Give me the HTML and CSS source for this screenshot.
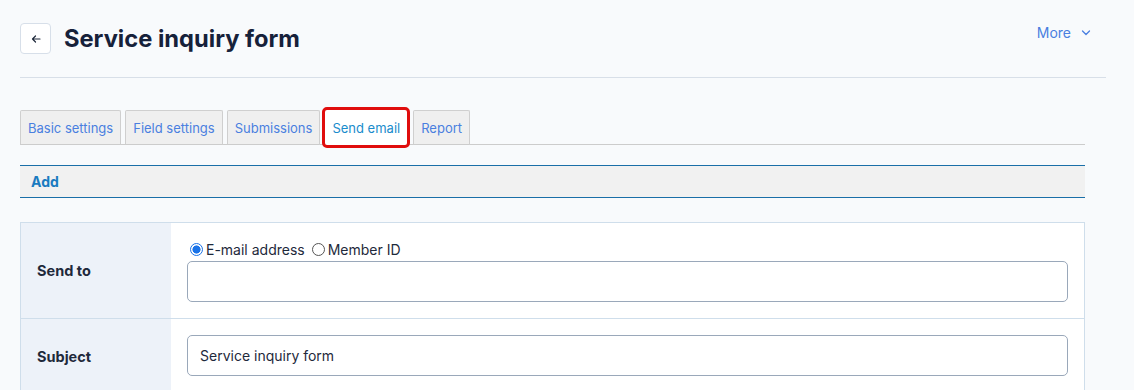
FILE: index.html
```html
<!DOCTYPE html>
<html>
<head>
<meta charset="utf-8">
<link rel="stylesheet" href="styles.css">
</head>
<body>
<div class="page">
  <header class="header">
    <div class="title-group">
      <button class="back-btn" aria-label="Back">
        <svg width="10" height="10" viewBox="0 0 10 10"><path d="M9 5H1.5M4.5 2L1.5 5l3 3" fill="none" stroke="#1e293b" stroke-width="1.2" stroke-linecap="round" stroke-linejoin="round"/></svg>
      </button>
      <h1 class="title">Service inquiry form</h1>
    </div>
    <div class="more">More
      <svg width="10" height="6" viewBox="0 0 10 6"><path d="M1.5 1l3.5 3.5L8.5 1" fill="none" stroke="#4a7fe0" stroke-width="1.3" stroke-linecap="round" stroke-linejoin="round"/></svg>
    </div>
  </header>
  <div class="content">
    <nav class="tabs">
      <a class="tab">Basic settings</a>
      <a class="tab">Field settings</a>
      <a class="tab">Submissions</a>
      <a class="tab active">Send email</a>
      <a class="tab">Report</a>
    </nav>
    <div class="add-bar"><a class="add-link">Add</a></div>
    <div class="form-table">
      <div class="row row-sendto">
        <div class="label">Send to</div>
        <div class="field">
          <div class="radios">
            <label class="radio"><span class="radio-dot checked"></span>E-mail address</label>
            <label class="radio"><span class="radio-dot"></span>Member ID</label>
          </div>
          <div class="input"></div>
        </div>
      </div>
      <div class="row row-subject">
        <div class="label">Subject</div>
        <div class="field">
          <div class="input">Service inquiry form</div>
        </div>
      </div>
    </div>
  </div>
</div>
</body>
</html>
```
FILE: styles.css
```css
* { box-sizing: border-box; }
html, body { margin: 0; padding: 0; }
body {
  background: #f8fafc;
  font-family: "Inter", "Liberation Sans", sans-serif;
  color: #1e293b;
  overflow: hidden;
  height: 390px;
}
.page { padding: 0 28px 0 20px; }
.header {
  height: 78px;
  border-bottom: 1px solid #d8dfe8;
  display: flex;
  justify-content: space-between;
  align-items: flex-start;
}
.title-group {
  display: flex;
  align-items: center;
  gap: 13px;
  margin-top: 23px;
}
.back-btn {
  width: 31px;
  height: 31px;
  border: 1px solid #d7dfe9;
  border-radius: 4px;
  background: #fff;
  display: flex;
  align-items: center;
  justify-content: center;
  padding: 0;
}
.title {
  margin: 0;
  font-size: 23.7px;
  font-weight: 700;
  color: #16213a;
}
.more {
  margin-top: 24px;
  margin-right: 15px;
  color: #4a7fe0;
  font-size: 14px;
  display: flex;
  align-items: center;
  gap: 10px;
}
.content { padding-right: 21px; padding-top: 32px; }
.tabs {
  display: flex;
  gap: 4px;
  border-bottom: 1px solid #cccccc;
  height: 35px;
  align-items: flex-end;
}
.tab {
  height: 35px;
  margin-bottom: -1px;
  padding: 0 7px;
  display: flex;
  align-items: center;
  background: #efefef;
  border: 1px solid #cfcfcf;
  border-bottom-color: #cccccc;
  border-radius: 2px 2px 0 0;
  color: #4a7fe0;
  font-size: 13px;
}
.tab.active {
  background: #fff;
  color: #1a8ccc;
  border: 3px solid #e00d0d;
  border-radius: 5px;
  height: 41px;
  margin-bottom: -4px;
  margin-left: -2px;
  margin-right: -1px;
  padding: 0 7px;
}
.add-bar {
  margin-top: 20px;
  height: 33px;
  border-top: 1px solid #1a6fa8;
  border-bottom: 1px solid #1a6fa8;
  background: #f1f1f1;
  display: flex;
  align-items: center;
  padding-left: 11px;
}
.add-link {
  color: #1a7bc0;
  font-weight: 700;
  font-size: 14px;
}
.form-table {
  margin-top: 24px;
  border: 1px solid #cfdeeb;
  background: #fff;
}
.row {
  display: flex;
}
.row + .row { border-top: 1px solid #cfdeeb; }
.label {
  width: 150px;
  flex-shrink: 0;
  background: #edf2f9;
  font-weight: 700;
  font-size: 14.5px;
  display: flex;
  align-items: center;
  padding-left: 16px;
  color: #1e293b;
}
.field {
  flex: 1;
  padding: 0 16px 0 16px;
}
.row-sendto { height: 95px; }
.row-sendto .field { padding-top: 16px; }
.radios {
  display: flex;
  gap: 7px;
  font-size: 14px;
  height: 20px;
  align-items: center;
  margin-left: 3px;
  color: #1e293b;
}
.radio { display: flex; align-items: center; gap: 3px; }
.radio-dot {
  width: 13px;
  height: 13px;
  border-radius: 50%;
  border: 1px solid #555;
  background: #fff;
  display: inline-block;
}
.radio-dot.checked {
  border: 1px solid #1a73e8;
  background: radial-gradient(circle, #1a73e8 0 3.8px, #fff 4.3px);
}
.input {
  height: 41px;
  border: 1px solid #9aa8ba;
  border-radius: 5px;
  background: #fff;
  font-size: 14px;
  display: flex;
  align-items: center;
  padding-left: 12px;
  color: #1e293b;
}
.row-sendto .input { margin-top: 2px; }
.row-subject { height: 75px; }
.row-subject .field { padding-top: 16px; }
```
